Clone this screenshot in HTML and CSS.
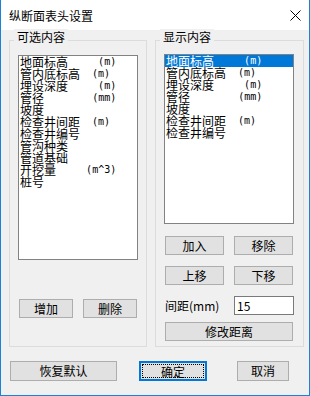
FILE: index.html
```html
<!DOCTYPE html>
<html lang="zh-CN">
<head>
    <meta charset="UTF-8">
    <meta name="viewport" content="width=device-width, initial-scale=1.0">
    <title>纵断面表头设置</title>
    <link rel="stylesheet" href="styles.css">
</head>
<body>
    <div class="window">
        <div class="titlebar">
            <span class="title">纵断面表头设置</span>
            <svg class="close" width="11" height="11" viewBox="0 0 11 11">
                <path d="M0.5 0.5L10.5 10.5M10.5 0.5L0.5 10.5" stroke="#000" stroke-width="1" fill="none"/>
            </svg>
        </div>

        <div class="content">
            <div class="groups">
                <div class="group group-left">
                    <div class="group-label">可选内容</div>
                    <ul class="list list-left">
                        <li>地面标高<span class="unit">     (m)</span></li>
                        <li>管内底标高<span class="unit">  (m)</span></li>
                        <li>埋设深度<span class="unit">     (m)</span></li>
                        <li>管径<span class="unit">        (mm)</span></li>
                        <li>坡度</li>
                        <li>检查井间距<span class="unit">  (m)</span></li>
                        <li>检查井编号</li>
                        <li>管沟种类</li>
                        <li>管道基础</li>
                        <li>开挖量<span class="unit">     (m^3)</span></li>
                        <li>桩号</li>
                    </ul>
                    <div class="btn-row btn-row-left">
                        <button class="btn btn-small">增加</button>
                        <button class="btn btn-small">删除</button>
                    </div>
                </div>

                <div class="group group-right">
                    <div class="group-label">显示内容</div>
                    <ul class="list list-right">
                        <li class="selected">地面标高<span class="unit">     (m)</span></li>
                        <li>管内底标高<span class="unit">  (m)</span></li>
                        <li>埋设深度<span class="unit">     (m)</span></li>
                        <li>管径<span class="unit">        (mm)</span></li>
                        <li>坡度</li>
                        <li>检查井间距<span class="unit">  (m)</span></li>
                        <li>检查井编号</li>
                    </ul>
                    <div class="btn-row btn-row-first">
                        <button class="btn btn-mid">加入</button>
                        <button class="btn btn-mid">移除</button>
                    </div>
                    <div class="btn-row btn-row-next">
                        <button class="btn btn-mid">上移</button>
                        <button class="btn btn-mid">下移</button>
                    </div>
                    <div class="spacing-row">
                        <label for="spacing">间距(mm)</label>
                        <input type="text" id="spacing" value="15">
                    </div>
                    <button class="btn btn-wide">修改距离</button>
                </div>
            </div>

            <div class="footer">
                <button class="btn btn-reset">恢复默认</button>
                <button class="btn btn-ok">确定</button>
                <button class="btn btn-cancel">取消</button>
            </div>
        </div>
    </div>
</body>
</html>
```

FILE: styles.css
```css
body {
    margin: 0;
    font-family: "Noto Sans CJK SC", "Noto Sans", sans-serif;
    font-size: 12px;
    color: #000;
}
.window {
    width: 310px;
    height: 396px;
    box-sizing: border-box;
    border: 1px solid #1883d7;
    border-top: none;
    background: #f0f0f0;
    display: flex;
    flex-direction: column;
}
.titlebar {
    height: 30px;
    flex-shrink: 0;
    background: #fff;
    display: flex;
    align-items: center;
    justify-content: space-between;
    padding: 0 8px 0 8px;
}
.title {
    font-size: 12px;
}
.content {
    flex: 1;
    padding: 10px 5px 0 8px;
}
.groups {
    display: flex;
    gap: 8px;
}
.group {
    box-sizing: border-box;
    height: 307px;
    border: 1px solid #dcdcdc;
    padding: 0 8px;
}
.group-left {
    width: 138px;
}
.group-right {
    width: 149px;
}
.group-label {
    width: fit-content;
    margin: -12px 0 0 -4px;
    padding: 0 3px;
    background: #f0f0f0;
    line-height: 16px;
}
.list {
    list-style: none;
    margin: 0;
    padding: 0;
    box-sizing: border-box;
    border: 1px solid #828282;
    background: #fff;
}
.list li {
    display: flex;
    align-items: center;
    height: 12px;
    padding-left: 1px;
    white-space: pre;
    line-height: 12px;
}
.list li.selected {
    background: #0078d7;
    color: #fff;
}
.unit {
    font-family: "DejaVu Sans Mono", monospace;
    font-size: 10px;
}
.list-left {
    margin-top: 10px;
    width: 120px;
    height: 205px;
}
.list-right {
    margin-top: 9px;
    width: 130px;
    height: 170px;
}
.btn {
    box-sizing: border-box;
    height: 19px;
    padding: 0;
    border: 1px solid #adadad;
    background: #e1e1e1;
    font-family: inherit;
    font-size: 12px;
    line-height: 17px;
    color: #000;
}
.btn-row {
    display: flex;
    gap: 10px;
    margin-left: 1px;
}
.btn-row-left {
    margin-top: 39px;
}
.btn-small {
    width: 54px;
}
.btn-row-first {
    margin-top: 12px;
}
.btn-row-next {
    margin-top: 11px;
}
.btn-mid {
    width: 59px;
}
.spacing-row {
    display: flex;
    align-items: center;
    justify-content: space-between;
    width: 129px;
    margin: 11px 0 0 1px;
}
.spacing-row input {
    box-sizing: border-box;
    width: 60px;
    height: 19px;
    margin: 0;
    padding: 0 2px;
    border: 1px solid #7a7a7a;
    background: #fff;
    font-family: inherit;
    font-size: 12px;
    outline: none;
}
.btn-wide {
    display: block;
    width: 128px;
    margin: 7px 0 0 1px;
}
.footer {
    display: flex;
    margin-top: 14px;
}
.footer .btn {
    height: 20px;
    line-height: 18px;
}
.btn-reset {
    width: 107px;
    margin-left: 1px;
}
.btn-ok {
    width: 68px;
    margin-left: 22px;
    border: 2px solid #0078d7;
    outline: 1px dotted #000;
    outline-offset: -4px;
}
.btn-cancel {
    width: 52px;
    margin-left: 30px;
}
```
